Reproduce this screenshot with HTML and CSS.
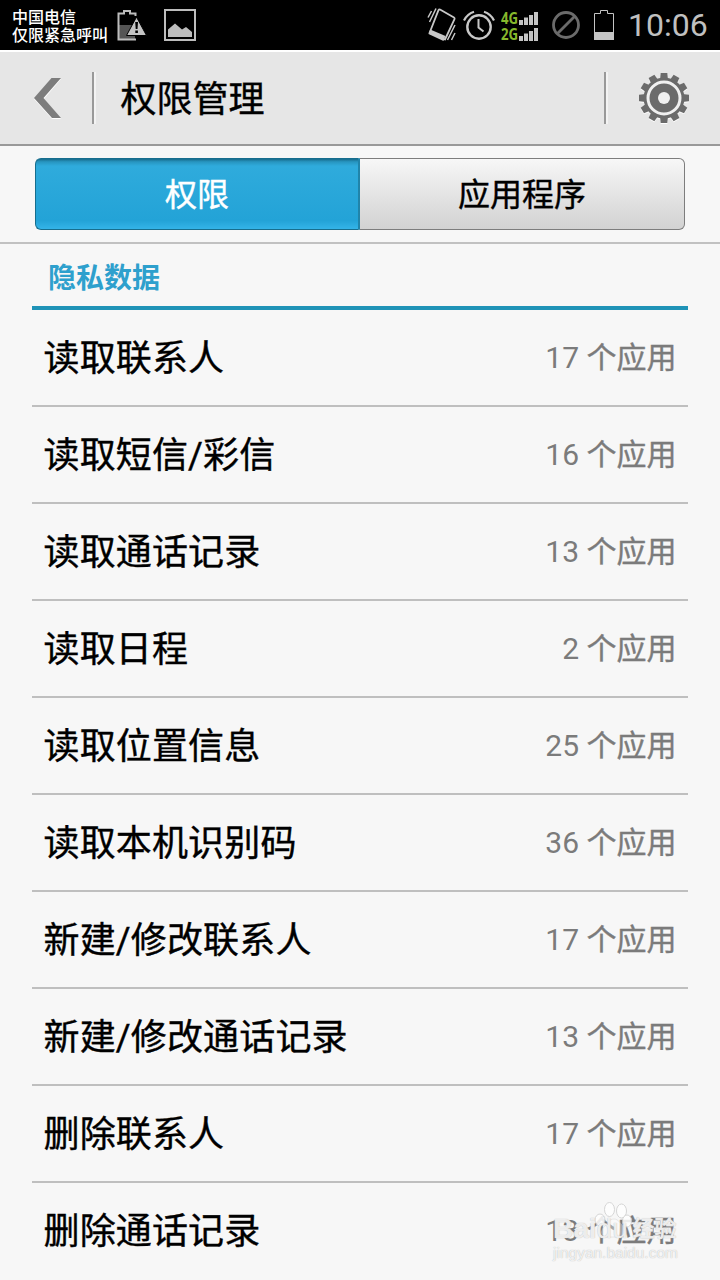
FILE: index.html
```html
<!DOCTYPE html>
<html lang="zh-CN">
<head>
  <meta charset="UTF-8">
  <meta name="viewport" content="width=device-width, initial-scale=1.0">
  <title>权限管理</title>
  <link rel="stylesheet" href="styles.css">
</head>
<body>
  <!-- 状态栏 -->
  <div class="status-bar">
    <div class="carrier">
      <div>中国电信</div>
      <div>仅限紧急呼叫</div>
    </div>
    <svg class="icon-battery-warn" width="30" height="32" viewBox="0 0 30 32">
      <path d="M1 16h17v15H1z" fill="#555"/>
      <path d="M18.500 7V4.500H13V2H7v2.500H1.500V30.500H19" fill="none" stroke="#bdbdbd" stroke-width="2"/>
      <path d="M19.500 8L29.500 26.500H9.500z" fill="#c4c4c4" stroke="#000" stroke-width="1"/>
      <path d="M18.200 13h2.800l-.5 7h-1.800zM18.300 21.500h2.600v2.500h-2.600z" fill="#000"/>
    </svg>
    <svg class="icon-picture" width="32" height="32" viewBox="0 0 32 32">
      <rect x="1" y="1" width="30" height="30" fill="none" stroke="#bdbdbd" stroke-width="2"/>
      <path d="M4 28V20.500l7-6 7 6 4-2.500 6 5v5z" fill="#bdbdbd"/>
    </svg>
    <div class="status-right">
      <svg class="icon-vibrate" width="30" height="36" viewBox="0 0 30 36">
        <path d="M13 2.500L27 10.500q1 .6.500 1.700L18 32.500 2.500 26 11.500 3.200q.5-1 1.500-.7z" fill="none" stroke="#c8c8c8" stroke-width="1.800" stroke-linejoin="round"/>
        <path d="M3.200 22.500L18.500 29l-2 5L1.500 27z" fill="#c8c8c8"/>
        <path d="M1 10.500L4.500 4M2.500 15L9 1.500M20.500 33L28 18M24.500 33l3.500-7" fill="none" stroke="#c8c8c8" stroke-width="1.500"/>
      </svg>
      <svg class="icon-alarm" width="32" height="30" viewBox="0 0 32 30">
        <circle cx="16" cy="17" r="11.700" fill="none" stroke="#c8c8c8" stroke-width="2.400"/>
        <path d="M15.500 9v8.500l5 4" fill="none" stroke="#c8c8c8" stroke-width="2"/>
        <path d="M1 10.500Q4 4 11 1.700M31 10.500Q28 4 21 1.700" fill="none" stroke="#c8c8c8" stroke-width="2.200"/>
      </svg>
      <div class="signals">
        <div class="signal">
          <span>4G</span>
          <svg width="19" height="13" viewBox="0 0 19 13"><path d="M0 8h4v5H0zM5 5.500h4V13H5zM10 3h4v10h-4zM15 0h4v13h-4z" fill="#c4c4c4"/></svg>
        </div>
        <div class="signal">
          <span>2G</span>
          <svg width="19" height="13" viewBox="0 0 19 13"><path d="M0 8h4v5H0zM5 5.500h4V13H5zM10 3h4v10h-4zM15 0h4v13h-4z" fill="#c4c4c4"/></svg>
        </div>
      </div>
      <svg class="icon-blocked" width="28" height="28" viewBox="0 0 28 28">
        <circle cx="14" cy="14" r="12.500" fill="none" stroke="#6b6b6b" stroke-width="2.800"/>
        <path d="M5.500 22.500l17-17" stroke="#6b6b6b" stroke-width="2.800"/>
      </svg>
      <svg class="icon-battery" width="20" height="30" viewBox="0 0 20 30">
        <path d="M.5 29V3.500H6.500V.5h7v3h6V29" fill="none" stroke="#c4c4c4"/>
        <path d="M0 22h20v8H0z" fill="#c4c4c4"/>
      </svg>
      <div class="clock">10:06</div>
    </div>
  </div>

  <!-- 标题栏 -->
  <div class="header">
    <svg class="back" width="30" height="42" viewBox="0 0 30 42">
      <path d="M17 1h10L10 21l17 20H18L0 21z" fill="#fff" transform="translate(0 1)"/>
      <path d="M17.500 1H27L9.500 21 27 41h-9L0 21z" fill="#7d7d7d"/>
    </svg>
    <div class="separator"></div>
    <div class="header-title">权限管理</div>
    <div class="separator"></div>
    <svg class="gear" width="52" height="52" viewBox="-26 -26 52 52">
      <defs>
        <g id="gear-shape">
          <circle r="20.500"/>
          <g id="teeth">
            <path id="tooth" d="M-4-18l.7-7h6.600l.7 7z"/>
            <use href="#tooth" transform="rotate(30)"/>
            <use href="#tooth" transform="rotate(60)"/>
          </g>
          <use href="#teeth" transform="rotate(90)"/>
          <use href="#teeth" transform="rotate(180)"/>
          <use href="#teeth" transform="rotate(270)"/>
        </g>
      </defs>
      <use href="#gear-shape" fill="#fff" y="1"/>
      <use href="#gear-shape" fill="#6b6b6b"/>
      <circle r="16" fill="none" stroke="#f0f0f0" stroke-width="3"/>
      <circle r="6" fill="#f0f0f0"/>
    </svg>
  </div>

  <!-- 切换标签 -->
  <div class="tabs">
    <div class="tab tab-active">权限</div>
    <div class="tab">应用程序</div>
  </div>

  <!-- 权限列表 -->
  <div class="content">
    <div class="section-title">隐私数据</div>
    <div class="row"><span class="name">读取联系人</span><span class="count"><span class="num">17</span> 个应用</span></div>
    <div class="row"><span class="name">读取短信/彩信</span><span class="count"><span class="num">16</span> 个应用</span></div>
    <div class="row"><span class="name">读取通话记录</span><span class="count"><span class="num">13</span> 个应用</span></div>
    <div class="row"><span class="name">读取日程</span><span class="count"><span class="num">2</span> 个应用</span></div>
    <div class="row"><span class="name">读取位置信息</span><span class="count"><span class="num">25</span> 个应用</span></div>
    <div class="row"><span class="name">读取本机识别码</span><span class="count"><span class="num">36</span> 个应用</span></div>
    <div class="row"><span class="name">新建/修改联系人</span><span class="count"><span class="num">17</span> 个应用</span></div>
    <div class="row"><span class="name">新建/修改通话记录</span><span class="count"><span class="num">13</span> 个应用</span></div>
    <div class="row"><span class="name">删除联系人</span><span class="count"><span class="num">17</span> 个应用</span></div>
    <div class="row"><span class="name">删除通话记录</span><span class="count"><span class="num">13</span> 个应用</span></div>
  </div>

  <!-- 水印 -->
  <div class="watermark">
    <svg class="paw" width="38" height="38" viewBox="0 0 38 38">
      <g fill="#fff" stroke="#d0d0d0">
        <ellipse cx="15.500" cy="7.500" rx="5" ry="7"/>
        <ellipse cx="27.500" cy="9" rx="5" ry="7"/>
        <ellipse cx="6" cy="18" rx="5" ry="6"/>
        <ellipse cx="33" cy="19" rx="4.500" ry="6"/>
        <path d="M20 17c5 0 6 5 10 8s3 10-3 10H13c-6 0-7-6-3-10s5-8 10-8z" fill-opacity=".4" stroke-opacity=".5"/>
      </g>
    </svg>
    <div class="mark-name"><b>Bai</b><span class="du">du</span><span class="mark-cn">经验</span></div>
    <div class="mark-url">jingyan.baidu.com</div>
  </div>
</body>
</html>
```

FILE: styles.css
```css
* { box-sizing: border-box; }
html, body {
  margin: 0; padding: 0;
  width: 720px; height: 1280px;
  overflow: hidden;
}
body {
  position: relative;
  background: #f7f7f7;
  color: #000;
  font-family: Roboto, "Noto Sans CJK SC", sans-serif;
}
svg { display: block; flex: none; }

/* 状态栏 */
.status-bar {
  display: flex;
  align-items: center;
  height: 50px;
  padding: 0 12px;
  background: #000;
  color: #fff;
}
.carrier {
  width: 105px;
  padding-top: 3px;
  font-size: 16px;
  font-weight: 500;
  line-height: 18px;
  white-space: nowrap;
}
.icon-picture { margin-left: 17px; }
.status-right {
  display: flex;
  align-items: center;
  margin-left: auto;
}
.icon-alarm { margin-left: 6px; }
.signals { margin-left: 6px; padding-top: 2px; }
.signal {
  display: flex;
  align-items: center;
  height: 16px;
}
.signal span {
  width: 18px;
  color: #86b82c;
  font: bold 16.5px/16px "Open Sans", sans-serif;
  transform: scaleX(0.8);
  transform-origin: left;
}
.icon-blocked { margin-left: 14px; }
.icon-battery { margin-left: 14px; }
.clock {
  width: 80px;
  margin-left: 14px;
  color: #c0c0c0;
  font-size: 32px;
  line-height: 52px;
}

/* 标题栏 */
.header {
  display: flex;
  align-items: center;
  height: 96px;
  padding: 0 30px 0 34px;
  border-top: 2px solid #fff;
  border-bottom: 2px solid #999;
  background: #e6e6e6;
}
.separator {
  width: 4px;
  height: 52px;
  border-left: 2px solid #999;
  border-right: 2px solid #f3f3f3;
}
.back { margin-right: 28px; }
.header-title {
  flex: 1;
  padding: 4px 0 0 24.5px;
  font-size: 36px;
  line-height: 52px;
  -webkit-text-stroke: 0.4px;
}
.gear { margin-left: 30px; }

/* 标签 */
.tabs {
  display: flex;
  height: 98px;
  padding: 12px 35px;
  border-bottom: 2px solid #c1c1c1;
}
.tab {
  flex: 1;
  height: 72px;
  border: 1px solid #7d7d7d;
  border-left: none;
  border-radius: 0 6px 6px 0;
  background: linear-gradient(#f7f7f7, #d2d2d2);
  font-size: 32px;
  line-height: 72px;
  text-align: center;
  -webkit-text-stroke: 0.4px;
}
.tab-active {
  flex: none;
  width: 325px;
  border: 1px solid #176e8e;
  border-right: 2px solid #2084aa;
  border-radius: 6px 0 0 6px;
  background: linear-gradient(#176b8b, #2795c0 4%, #2fabdc 10%, #23a3d7 88%, #34b4e8);
  color: #fff;
}

/* 列表 */
.content { padding: 0 32px; }
.section-title {
  height: 66px;
  padding-left: 16px;
  border-bottom: 4px solid #1f93b7;
  color: #2ea0cd;
  font-size: 28px;
  font-weight: bold;
  line-height: 70px;
}
.row {
  display: flex;
  align-items: center;
  justify-content: space-between;
  height: 97px;
  padding: 0 11.5px 5px 11.5px;
  border-bottom: 2px solid #bfbfbf;
}
.row:last-child { border-bottom-color: transparent; }
.name {
  font-size: 36px;
  letter-spacing: 0.15px;
  -webkit-text-stroke: 0.4px;
}
.count {
  color: #7b7b7b;
  font-size: 30px;
  -webkit-text-stroke: 0.4px;
}
.num { -webkit-text-stroke: 0; }

/* 水印 */
.watermark {
  position: absolute;
  left: 553px;
  top: 1202px;
  width: 128px;
  height: 64px;
  color: rgba(255, 255, 255, 0.8);
  font-family: "Liberation Sans", "Noto Sans CJK SC", sans-serif;
  text-shadow: 0 0 1px #aaa;
  white-space: nowrap;
}
.paw {
  position: absolute;
  left: 41px;
  top: 0;
  opacity: 0.85;
}
.mark-name {
  position: relative;
  display: flex;
  padding-top: 13px;
  font-size: 28px;
  line-height: 28px;
}
.du { width: 36px; }
.mark-cn { font-size: 22px; font-weight: bold; }
.mark-url {
  position: relative;
  font-size: 15.5px;
  line-height: 20px;
}
```
